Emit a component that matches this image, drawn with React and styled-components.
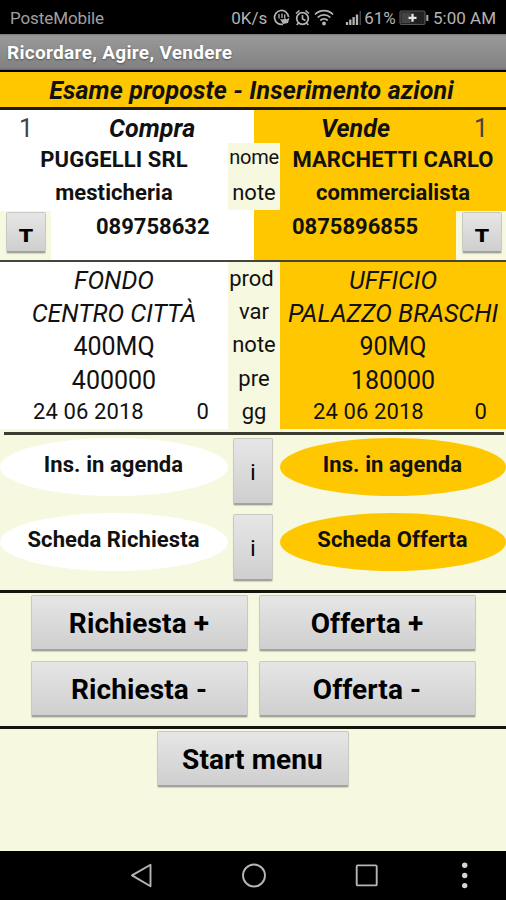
import styled, { createGlobalStyle } from 'styled-components';

const yellow = '#ffc700';
const cream = '#f6f8df';

const products = [
  { label: 'prod', left: 'FONDO', right: 'UFFICIO', italic: true },
  { label: 'var', left: 'CENTRO CITTÀ', right: 'PALAZZO BRASCHI', italic: true },
  { label: 'note', left: '400MQ', right: '90MQ' },
  { label: 'pre', left: '400000', right: '180000' },
];

export default function App() {
  return (
    <>
      <GlobalStyle />
      <SScreen>
        <SStatusBar>
          <SCarrier>PosteMobile</SCarrier>
          <SSpeed>0K/s</SSpeed>
          <StatusIcons />
          <SPercent>61%</SPercent>
          <Battery />
          <SClock>5:00 AM</SClock>
        </SStatusBar>
        <STitleBar>Ricordare, Agire, Vendere</STitleBar>
        <SHeading>Esame proposte - Inserimento azioni</SHeading>

        <SContacts>
          <SSideHead>
            <SCount>1</SCount>
            <SSideName $left={90}>Compra</SSideName>
          </SSideHead>
          <SSideHead $sell>
            <SSideName $left={67}>Vende</SSideName>
            <SCount $right>1</SCount>
          </SSideHead>
        </SContacts>
        <STriple>
          <SValue $bold>PUGGELLI SRL</SValue>
          <SLabel $small>nome</SLabel>
          <SValue $bold $sell>MARCHETTI CARLO</SValue>
        </STriple>
        <STriple>
          <SValue $bold>mesticheria</SValue>
          <SLabel>note</SLabel>
          <SValue $bold $sell>commercialista</SValue>
        </STriple>
        <SPhones>
          <SCallCell>
            <SCallButton><SCallGlyph>T</SCallGlyph></SCallButton>
          </SCallCell>
          <SPhone>089758632</SPhone>
          <SPhone $sell>0875896855</SPhone>
          <SCallCell>
            <SCallButton><SCallGlyph>T</SCallGlyph></SCallButton>
          </SCallCell>
        </SPhones>
        <SThinLine />

        {products.map((p) => (
          <STriple key={p.label}>
            <SValue $italic={p.italic}>{p.left}</SValue>
            <SLabel $shifted={p.label === 'prod'}>{p.label}</SLabel>
            <SValue $sell $italic={p.italic}>{p.right}</SValue>
          </STriple>
        ))}
        <STriple>
          <SDate>
            <span>24 06 2018</span>
            <span>0</span>
          </SDate>
          <SLabel>gg</SLabel>
          <SDate $sell>
            <span>24 06 2018</span>
            <span>0</span>
          </SDate>
        </STriple>
        <SSoftLine />

        <SActions>
          <SOval>Ins. in agenda</SOval>
          <SInfoButton>i</SInfoButton>
          <SOval $sell>Ins. in agenda</SOval>
          <SOval>Scheda Richiesta</SOval>
          <SInfoButton>i</SInfoButton>
          <SOval $sell>Scheda Offerta</SOval>
        </SActions>
        <SLine />

        <SButtons>
          <SButton>Richiesta +</SButton>
          <SButton>Offerta +</SButton>
          <SButton>Richiesta -</SButton>
          <SButton>Offerta -</SButton>
        </SButtons>
        <SLine />
        <SFooter>
          <SButton $start>Start menu</SButton>
        </SFooter>
        <NavBar />
      </SScreen>
    </>
  );
}

const StatusIcons = () => (
  <SIcons width="90" height="20" viewBox="0 0 90 20" fill="none" stroke="#b4b4b4">
    {/* data saver */}
    <path d="M12 16.3A7 7 0 1 1 17.5 9" strokeWidth="1.7" />
    <path d="M8 6v4.500M11 5.500v4.500M13.700 6.500v3.500" strokeWidth="1.300" />
    <path d="M9 11l3 5 5-1 1.500-5.500-3 2-1.500-1.500-2 1.500z" fill="#b4b4b4" stroke="none" />
    {/* alarm */}
    <circle cx="31.500" cy="10.500" r="5.800" strokeWidth="1.700" />
    <path d="M31.500 7v4l3 1.500M25 5.500l3.500-3M38 5.500l-3.500-3M27.500 15l-1.800 2M35.500 15l1.800 2" strokeWidth="1.600" />
    {/* wifi */}
    <path d="M44 6.500a12.500 12.500 0 0 1 18 0M46.700 9.500a8.700 8.700 0 0 1 12.600 0M49.300 12.500a5.200 5.200 0 0 1 7.400 0" strokeWidth="1.800" />
    <circle cx="53" cy="15.500" r="1.900" fill="#b4b4b4" stroke="none" />
    {/* signal */}
    <path d="M76 17v-3M79.300 17v-5.500M82.600 17V9M86 17V6.500" strokeWidth="2.300" />
    <path d="M89.300 17V3" stroke="#444" strokeWidth="1.500" />
  </SIcons>
);

const Battery = () => (
  <SBattery width="30" height="16" viewBox="0 0 30 16">
    <rect x="1" y="1" width="25" height="13.500" rx="1.500" fill="#222" stroke="#555" strokeWidth="1.200" />
    <rect x="2.500" y="2.500" width="9" height="10.500" fill="#444" />
    <path d="M13.500 3.800v8M9.500 7.800h8" stroke="#e4e4e4" strokeWidth="2.300" />
    <path d="M28.300 5v6" stroke="#aaa" strokeWidth="2" />
  </SBattery>
);

const NavBar = () => (
  <SNavBar>
    <svg width="506" height="49" viewBox="0 0 506 49" fill="none" stroke="#b5b5b5" strokeWidth="1.900">
      <path d="M150.500 13.700v21.600L132 24.400z" strokeLinejoin="round" />
      <circle cx="254" cy="24.500" r="11" />
      <rect x="356.700" y="14.400" width="20" height="20" rx="1" />
      <g fill="#d5d5d5" stroke="none">
        <circle cx="464.700" cy="14.300" r="2.700" />
        <circle cx="464.700" cy="24.500" r="2.700" />
        <circle cx="464.700" cy="34.600" r="2.700" />
      </g>
    </svg>
  </SNavBar>
);

const GlobalStyle = createGlobalStyle`
  * {
    box-sizing: border-box;
  }
  body {
    margin: 0;
    background: #000;
    font-family: Roboto, sans-serif;
    color: #111;
  }
  svg {
    display: block;
  }
`;

const SScreen = styled.main`
  display: flex;
  flex-direction: column;
  width: 506px;
  height: 900px;
  background: ${cream};
  white-space: nowrap;
  overflow: hidden;
`;

const SStatusBar = styled.header`
  display: flex;
  align-items: center;
  height: 34px;
  padding: 2px 10px 0;
  background: #000;
  color: #b4b4b4;
  font-size: 17px;
  line-height: 20px;
`;
const SCarrier = styled.span`
  width: 222px;
  color: #a0a0a0;
  letter-spacing: -0.1px;
`;
const SSpeed = styled.span`
  width: 40px;
`;
const SIcons = styled.svg`
  flex: none;
`;
const SPercent = styled.span`
  width: 38px;
  padding-left: 3px;
`;
const SBattery = styled.svg`
  flex: none;
`;
const SClock = styled.span`
  margin-left: 4px;
`;

const STitleBar = styled.div`
  height: 38px;
  padding-left: 7px;
  border-bottom: 2px solid #000;
  background: linear-gradient(#777 0, #999 6%, #828282 94%, #666 100%);
  color: #fff;
  font-size: 19px;
  font-weight: bold;
  letter-spacing: 0.300px;
  line-height: 37px;
  text-shadow: 0 1px 2px rgba(0, 0, 0, 0.4);
`;

const SHeading = styled.h1`
  height: 38px;
  margin: 0;
  padding-right: 3px;
  border-bottom: 3px solid #1a1a10;
  background: ${yellow};
  font-size: 25px;
  font-style: italic;
  letter-spacing: 0.120px;
  line-height: 38px;
  text-align: center;
`;

const SContacts = styled.section`
  display: grid;
  grid-template-columns: 254px 252px;
  height: 33px;
`;
const SSideHead = styled.div`
  display: flex;
  line-height: 37px;
  background: ${(p) => (p.$sell ? yellow : '#fff')};
`;
const SCount = styled.span`
  width: 0;
  margin-left: ${(p) => (p.$right ? 'auto' : '19px')};
  padding-right: ${(p) => (p.$right ? '32px' : 0)};
  font-size: 25px;
  color: #444;
`;
const SSideName = styled.h2`
  margin: 0 0 0 ${(p) => p.$left}px;
  font-size: 25px;
  font-style: italic;
  font-weight: bold;
  letter-spacing: 0.1px;
`;

const STriple = styled.div`
  display: grid;
  grid-template-columns: 228px 52px 226px;
  height: 33.300px;
`;
const SValue = styled.div`
  background: ${(p) => (p.$sell ? yellow : '#fff')};
  font-size: ${(p) => (p.$bold ? 22 : 25)}px;
  font-weight: ${(p) => (p.$bold ? 700 : 400)};
  font-style: ${(p) => (p.$italic ? 'italic' : 'normal')};
  letter-spacing: ${(p) => (p.$bold ? 0.080 : 0)}px;
  line-height: ${(p) => (p.$bold ? 34.500 : 38)}px;
  text-align: center;
`;
const SLabel = styled.div`
  padding-right: ${(p) => (p.$shifted ? 5 : 0)}px;
  background: ${cream};
  font-size: ${(p) => (p.$small ? 20 : 22)}px;
  letter-spacing: ${(p) => (p.$small ? -0.3 : 0)}px;
  line-height: ${(p) => (p.$small ? 29 : 34)}px;
  text-align: center;
`;

const SPhones = styled.div`
  display: grid;
  grid-template-columns: 51px 203px 202px 50px;
  height: 50.400px;
`;
const SCallCell = styled.div`
  padding: 2px 0 0 5.500px;
`;
const SPhone = styled.div`
  padding-left: ${(p) => (p.$sell ? 38 : 45)}px;
  background: ${(p) => (p.$sell ? yellow : '#fff')};
  font-size: 22px;
  font-weight: bold;
  line-height: 33px;
`;

const SGrayButton = styled.button`
  padding: 0;
  border: 1px solid #c9c9c4;
  border-bottom: 2px solid #a3a39b;
  border-radius: 2px;
  background: linear-gradient(#e6e6e6, #cfcfcf);
  box-shadow: 0 1px 1px rgba(0, 0, 0, 0.15);
  color: #000;
  font-family: inherit;
`;
const SCallButton = styled(SGrayButton)`
  display: block;
  width: 40px;
  height: 41px;
  padding-top: 8px;
  font-size: 17px;
  font-weight: bold;
`;
const SCallGlyph = styled.span`
  display: block;
  font-family: 'DejaVu Sans', sans-serif;
  transform: scaleX(1.200);
`;

const SThinLine = styled.div`
  height: 1.700px;
  background: #44443a;
`;

const SDate = styled.div`
  display: flex;
  justify-content: space-between;
  padding: 0 19px 0 33px;
  background: ${(p) => (p.$sell ? yellow : '#fff')};
  font-size: 22px;
  letter-spacing: 0.1px;
  line-height: 33px;
`;

const SSoftLine = styled.div`
  height: 3px;
  margin: 3.600px 2px 0 4px;
  background: #3b3b30;
`;

const SActions = styled.section`
  display: grid;
  grid-template-columns: 228px 52px 226px;
  grid-auto-rows: 75.700px;
  height: 155px;
  padding-top: 3px;
`;
const SOval = styled.div`
  height: 58px;
  padding-right: 1px;
  border-radius: 50%;
  background: ${(p) => (p.$sell ? yellow : '#fff')};
  font-size: 22px;
  font-weight: bold;
  letter-spacing: 0.080px;
  line-height: 53px;
  text-align: center;
`;
const SInfoButton = styled(SGrayButton)`
  width: 40px;
  height: 67px;
  margin: 0.500px 0 0 5px;
  padding-top: 3px;
  font-size: 22px;
`;

const SLine = styled.div`
  flex: none;
  height: 3px;
  background: #16160f;
`;

const SButtons = styled.section`
  display: grid;
  grid-template-columns: 217px 217px;
  grid-auto-rows: 56px;
  gap: 10px 11px;
  height: 133px;
  padding: 2px 0 0 31px;
`;
const SButton = styled(SGrayButton)`
  width: ${(p) => (p.$start ? '192px' : 'auto')};
  height: 56px;
  padding: 3px 1px 0 0;
  font-size: 28px;
  font-weight: bold;
  letter-spacing: 0.100px;
`;
const SFooter = styled.section`
  flex: 1;
  padding: 2px 0 0 157px;
`;

const SNavBar = styled.nav`
  height: 49px;
  background: #000;
`;
